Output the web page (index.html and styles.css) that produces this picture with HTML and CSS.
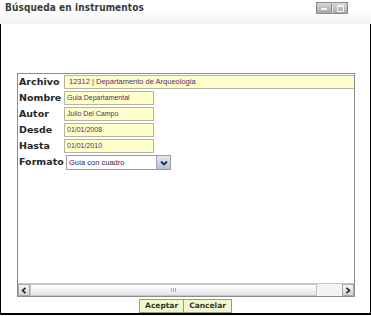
FILE: index.html
```html
<!DOCTYPE html>
<html lang="es">
<head>
    <meta charset="UTF-8">
    <title>Búsqueda en instrumentos</title>
    <link rel="stylesheet" href="styles.css">
</head>
<body>
    <div class="window">
        <!-- barra de titulo -->
        <div class="titlebar">
            <span class="title">Búsqueda en instrumentos</span>
            <div class="winbtns">
                <span class="wb"><span class="ico-min"></span></span>
                <span class="wb"><span class="ico-max"></span></span>
            </div>
        </div>

        <div class="frame">
            <div class="panel">
                <div class="form">
                    <label>Archivo</label>
                    <div class="field wide">12312 | Departamento de Arqueologia</div>

                    <label>Nombre</label>
                    <div class="field">Guia Departamental</div>

                    <label>Autor</label>
                    <div class="field">Julio Del Campo</div>

                    <label>Desde</label>
                    <div class="field">01/01/2008</div>

                    <label>Hasta</label>
                    <div class="field">01/01/2010</div>

                    <label>Formato</label>
                    <div class="select">
                        <span class="sel-text">Guía con cuadro</span>
                        <span class="sel-btn">
                            <svg width="8" height="6" viewBox="0 0 8 6"><path d="M1 1.5 L4 4.5 L7 1.5" fill="none" stroke="#1a2a5a" stroke-width="1.8"/></svg>
                        </span>
                    </div>
                </div>

                <!-- scroll horizontal -->
                <div class="hscroll">
                    <span class="sb-arrow">
                        <svg width="6" height="7" viewBox="0 0 6 7"><path d="M4.5 0.8 L1.5 3.5 L4.5 6.2" fill="none" stroke="#222" stroke-width="1.6"/></svg>
                    </span>
                    <span class="sb-thumb"><span class="grip"></span></span>
                    <span class="sb-track"></span>
                    <span class="sb-arrow">
                        <svg width="6" height="7" viewBox="0 0 6 7"><path d="M1.5 0.8 L4.5 3.5 L1.5 6.2" fill="none" stroke="#222" stroke-width="1.6"/></svg>
                    </span>
                </div>
            </div>

            <div class="actions">
                <button type="button">Aceptar</button>
                <button type="button">Cancelar</button>
            </div>
        </div>
    </div>
</body>
</html>
```

FILE: styles.css
```css
body {
    margin: 0;
    background-color: #ffffff;
    font-family: "DejaVu Sans", Verdana, sans-serif;
}

.window {
    width: 371px;
    height: 316px;
    display: flex;
    flex-direction: column;
}

.titlebar {
    height: 24px;
    display: flex;
    justify-content: space-between;
    align-items: flex-start;
    background: linear-gradient(#ffffff, #ffffff 40%, #f2f2f2);
    flex-shrink: 0;
}

.title {
    margin: 2px 0 0 5px;
    font-family: "DejaVu Sans Condensed", "DejaVu Sans", sans-serif;
    font-weight: bold;
    font-size: 10px;
    color: #3a3a3a;
    letter-spacing: 0.1px;
}

.winbtns {
    display: flex;
    margin: 2px 23px 0 0;
}

.wb {
    width: 14px;
    height: 10px;
    border: 1px solid #8a8a8a;
    background: linear-gradient(#d8d8d8, #a8a8a8);
    display: flex;
    align-items: center;
    justify-content: center;
}

.wb + .wb {
    border-left: 1px solid #e0e0e0;
}

.ico-min {
    width: 6px;
    height: 2px;
    background: #f4f4f4;
    margin-top: 2px;
}

.ico-max {
    width: 5px;
    height: 4px;
    border: 1px solid #f4f4f4;
    border-top-width: 2px;
}

.frame {
    flex: 1;
    border: 1px solid #000000;
    border-top: none;
    border-bottom-width: 2px;
    display: flex;
    flex-direction: column;
    margin-bottom: 1px;
}

.panel {
    margin: 49px 0 0 16px;
    width: 336px;
    height: 222px;
    border: 1px solid #8c8c8c;
    display: flex;
    flex-direction: column;
}

.form {
    flex: 1;
    display: grid;
    grid-template-columns: 46px 1fr;
    grid-auto-rows: 16px;
    align-items: start;
    padding-top: 1px;
}

.form label {
    padding-left: 1px;
    font-weight: bold;
    font-size: 9.5px;
    color: #262626;
    line-height: 14px;
}

.field {
    justify-self: start;
    width: 86px;
    height: 12px;
    border: 1px solid #b4b4a0;
    background-color: #ffffcc;
    font-family: "Liberation Sans", Arial, sans-serif;
    font-size: 7px;
    line-height: 12px;
    color: #5b1f6e;
    padding-left: 2px;
}

.field.wide {
    justify-self: stretch;
    width: auto;
    padding-left: 4px;
    font-size: 7.5px;
    border-right: none;
}

.select {
    margin-left: 2px;
    width: 103px;
    height: 13px;
    border: 1px solid #9a9aa8;
    background: #ffffff;
    display: flex;
    align-items: stretch;
}

.sel-text {
    flex: 1;
    font-family: "Liberation Sans", Arial, sans-serif;
    font-size: 7.5px;
    line-height: 13px;
    color: #3a1a50;
    padding-left: 2px;
}

.sel-btn {
    width: 13px;
    background: linear-gradient(#e4e8f0, #b8c0d0);
    border-left: 1px solid #a0a8b8;
    display: flex;
    align-items: center;
    justify-content: center;
}

.hscroll {
    height: 12px;
    display: flex;
    border-top: 1px solid #c8c8c8;
}

.sb-arrow {
    width: 12px;
    background: linear-gradient(#f6f6f6, #d4d4d8);
    border: 1px solid #a8a8b0;
    box-sizing: border-box;
    display: flex;
    align-items: center;
    justify-content: center;
}

.sb-thumb {
    width: 287px;
    background: linear-gradient(#ffffff, #e4e6ec);
    border: 1px solid #c0c4cc;
    box-sizing: border-box;
    display: flex;
    align-items: center;
    justify-content: center;
}

.grip {
    width: 6px;
    height: 4px;
    background: repeating-linear-gradient(90deg, #a8acb8 0 1px, transparent 1px 2px);
}

.sb-track {
    flex: 1;
    background: #f4f4f6;
}

.actions {
    display: flex;
    justify-content: center;
    margin: 2px 0 0 0;
}

.actions button {
    height: 14px;
    padding: 0 5px;
    border: 1px solid #9a9a8a;
    background-color: #f4f6cc;
    font-family: "DejaVu Sans", sans-serif;
    font-weight: bold;
    font-size: 7.5px;
    color: #2a3a2a;
    line-height: 12px;
}

.actions button + button {
    border-left: none;
}
```
